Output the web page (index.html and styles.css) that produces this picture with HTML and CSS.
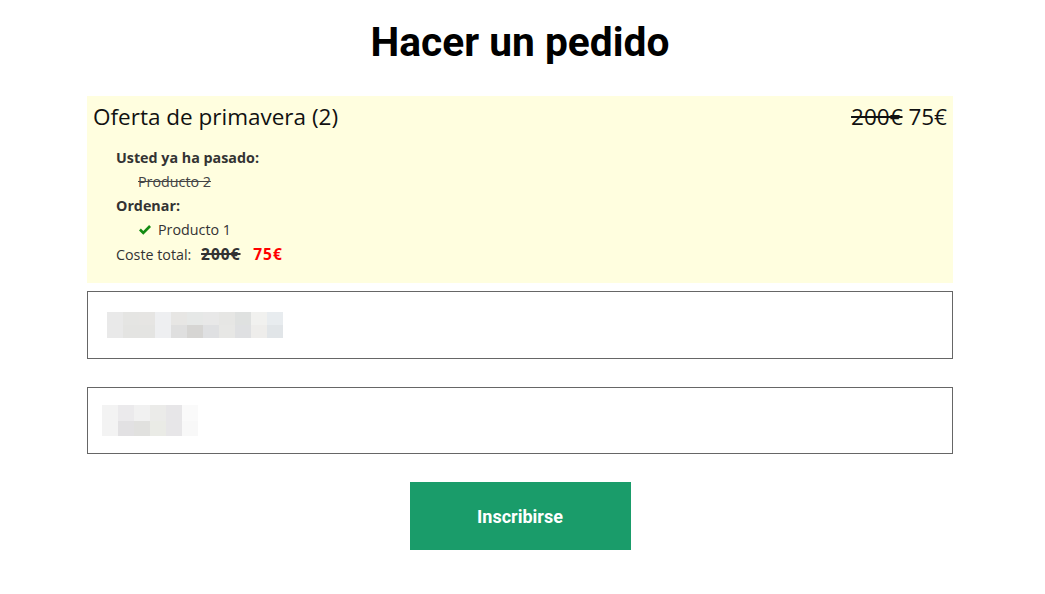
FILE: index.html
```html
<!DOCTYPE html>
<html lang="es">
<head>
<meta charset="utf-8">
<title>Hacer un pedido</title>
<link rel="stylesheet" href="styles.css">
</head>
<body>
<main class="page">
  <h1 class="title">Hacer un pedido</h1>
  <section class="offer">
    <div class="offer-head">
      <span class="offer-name">Oferta de primavera (2)</span>
      <span class="offer-price"><s>200€</s> 75€</span>
    </div>
    <div class="offer-body">
      <div class="label">Usted ya ha pasado:</div>
      <div class="item passed"><s>Producto 2</s></div>
      <div class="label">Ordenar:</div>
      <div class="item"><svg class="check" viewBox="0 0 16 14" width="14" height="12"><path d="M1 7.5 L3.2 5.3 L6 8.1 L12.8 1.3 L15 3.5 L6 12.5 Z" fill="#138b13"/></svg>Producto 1</div>
      <div class="total">Coste total: <s class="old">200€</s> <span class="new">75€</span></div>
    </div>
  </section>
  <div class="field">
    <div class="blur blur-a">
      <div class="row"><i style="background:#e9e9e9"></i><i style="background:#e5e5e3"></i><i style="background:#e6e5e3"></i><i style="background:#eeeff1"></i><i style="background:#e7e6e4"></i><i style="background:#e6e8e7"></i><i style="background:#e8e8e8"></i><i style="background:#e6e6e4"></i><i style="background:#dfe1e0"></i><i style="background:#f1f1ef"></i><i style="background:#e8ecef"></i></div>
      <div class="row"><i style="background:#e9e9e9"></i><i style="background:#e4e4e2"></i><i style="background:#e4e4e2"></i><i style="background:#eeeff1"></i><i style="background:#dfdfdf"></i><i style="background:#d6d5d3"></i><i style="background:#dfe0e2"></i><i style="background:#e7e7e5"></i><i style="background:#dfe0e2"></i><i style="background:#eeedeb"></i><i style="background:#e1e5e8"></i></div>
    </div>
  </div>
  <div class="field">
    <div class="blur blur-b">
      <div class="row"><i style="background:#f3f3f3"></i><i style="background:#ebeaec"></i><i style="background:#f1f1f1"></i><i style="background:#ebebe9"></i><i style="background:#e7e6e8"></i><i style="background:#fafafa"></i></div>
      <div class="row"><i style="background:#f3f3f3"></i><i style="background:#e2e1e3"></i><i style="background:#e1e1df"></i><i style="background:#eaebe6"></i><i style="background:#e7e6e8"></i><i style="background:#f8f8f8"></i></div>
    </div>
  </div>
  <div class="actions">
    <button class="submit" type="button">Inscribirse</button>
  </div>
</main>
</body>
</html>
```

FILE: styles.css
```css
* { box-sizing: border-box; }
html, body { margin: 0; padding: 0; background: #fff; }
body { font-family: "Open Sans", sans-serif; color: #000; padding-right: 5px; }

.page {
  width: 866px;
  margin: 0 auto;
  padding-top: 16px;
  display: flex;
  flex-direction: column;
}

.title {
  margin: 0 0 28px;
  text-align: center;
  font-family: Roboto, sans-serif;
  font-weight: 700;
  font-size: 40.7px;
  line-height: 52px;
  color: #000;
}

.offer {
  background: #fffedf;
  padding: 4px 6px 16px 6px;
}

.offer-head {
  display: flex;
  justify-content: space-between;
  align-items: baseline;
  font-family: "Open Sans", sans-serif;
  font-size: 22.5px;
  line-height: 34px;
  color: #111;
}

.offer-price s { text-decoration-thickness: 2px; }

.offer-body {
  padding: 12px 0 0 23px;
  font-family: "Open Sans", sans-serif;
  font-size: 14.3px;
  line-height: 24px;
  color: #333;
}

.label { font-weight: 700; }

.item { padding-left: 22px; display: flex; align-items: center; }
.item.passed s { color: #444; }
.check { margin-right: 6px; }

.total .old { font-weight: 700; font-size: 15.5px; letter-spacing: 1px; margin: 0 9px 0 6px; text-decoration-thickness: 2px; }
.total .new { font-weight: 700; font-size: 15.5px; letter-spacing: 1px; color: #f00; }

.field {
  height: 68px;
  border: 1px solid #666;
  margin-top: 8px;
  display: flex;
  align-items: center;
  background: #fff;
}
.field + .field { margin-top: 28px; height: 67px; }

.blur { display: flex; flex-direction: column; }
.blur .row { display: flex; }
.blur i { display: block; width: 16px; }
.blur-a { margin-left: 19px; }
.blur-a .row i { height: 13px; }
.blur-b { margin-left: 14px; }
.blur-b .row:first-child i { height: 16px; }
.blur-b .row:last-child i { height: 15px; }

.actions { display: flex; justify-content: center; margin-top: 28px; }

.submit {
  width: 221px;
  height: 68px;
  border: 0;
  background: #1a9c6a;
  color: #fff;
  font-family: Roboto, sans-serif;
  font-weight: 700;
  font-size: 18px;
  cursor: pointer;
}
```
